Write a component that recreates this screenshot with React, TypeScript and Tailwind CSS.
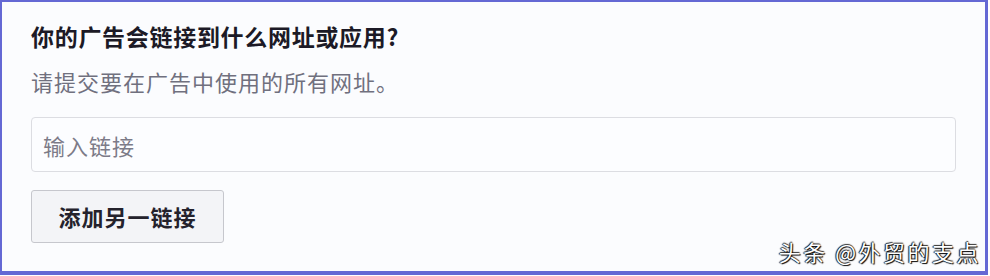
import React from "react";

const font = { fontFamily: '"Noto Sans CJK SC", "Noto Sans", sans-serif' };

export default function App() {
  return (
    <div className="w-[990px] h-[276px] bg-white" style={font}>
      <div className="relative w-[988px] h-[275px] border-t-2 border-l-2 border-r-[3px] border-b-[4px] border-[#6468d4] bg-[#fbfcfe] pl-[29px] pr-[30px] pt-[19px]">
        <h1 className="text-[23px] leading-[30px] font-bold text-[#1c1a26] tracking-[0.7px]">
          你的广告会链接到什么网址或应用?
        </h1>
        <p className="mt-[15px] text-[22px] leading-[30px] text-[#70707e] tracking-[1px]">
          请提交要在广告中使用的所有网址。
        </p>
        <input
          type="text"
          placeholder="输入链接"
          className="mt-[21px] block w-[925px] h-[55px] rounded-[4px] border border-[#dcdde2] bg-[#fcfdff] px-[11px] text-[22px] tracking-[1px] placeholder:text-[#7c7b88] outline-none"
        />
        <button className="mt-[18px] flex items-center justify-center w-[193px] h-[53px] rounded-[3px] border border-[#c6c7cd] bg-[#f3f4f7] text-[22px] font-bold text-[#24222c] tracking-[1px]">
          添加另一链接
        </button>
        <div className="absolute right-[4px] bottom-[6px] text-[22px] leading-[28px] text-white tracking-[2.5px] [text-shadow:1px_1px_1px_#000,-1px_0_1px_#111,0_-1px_1px_#333]">
          头条 @外贸的支点
        </div>
      </div>
    </div>
  );
}
